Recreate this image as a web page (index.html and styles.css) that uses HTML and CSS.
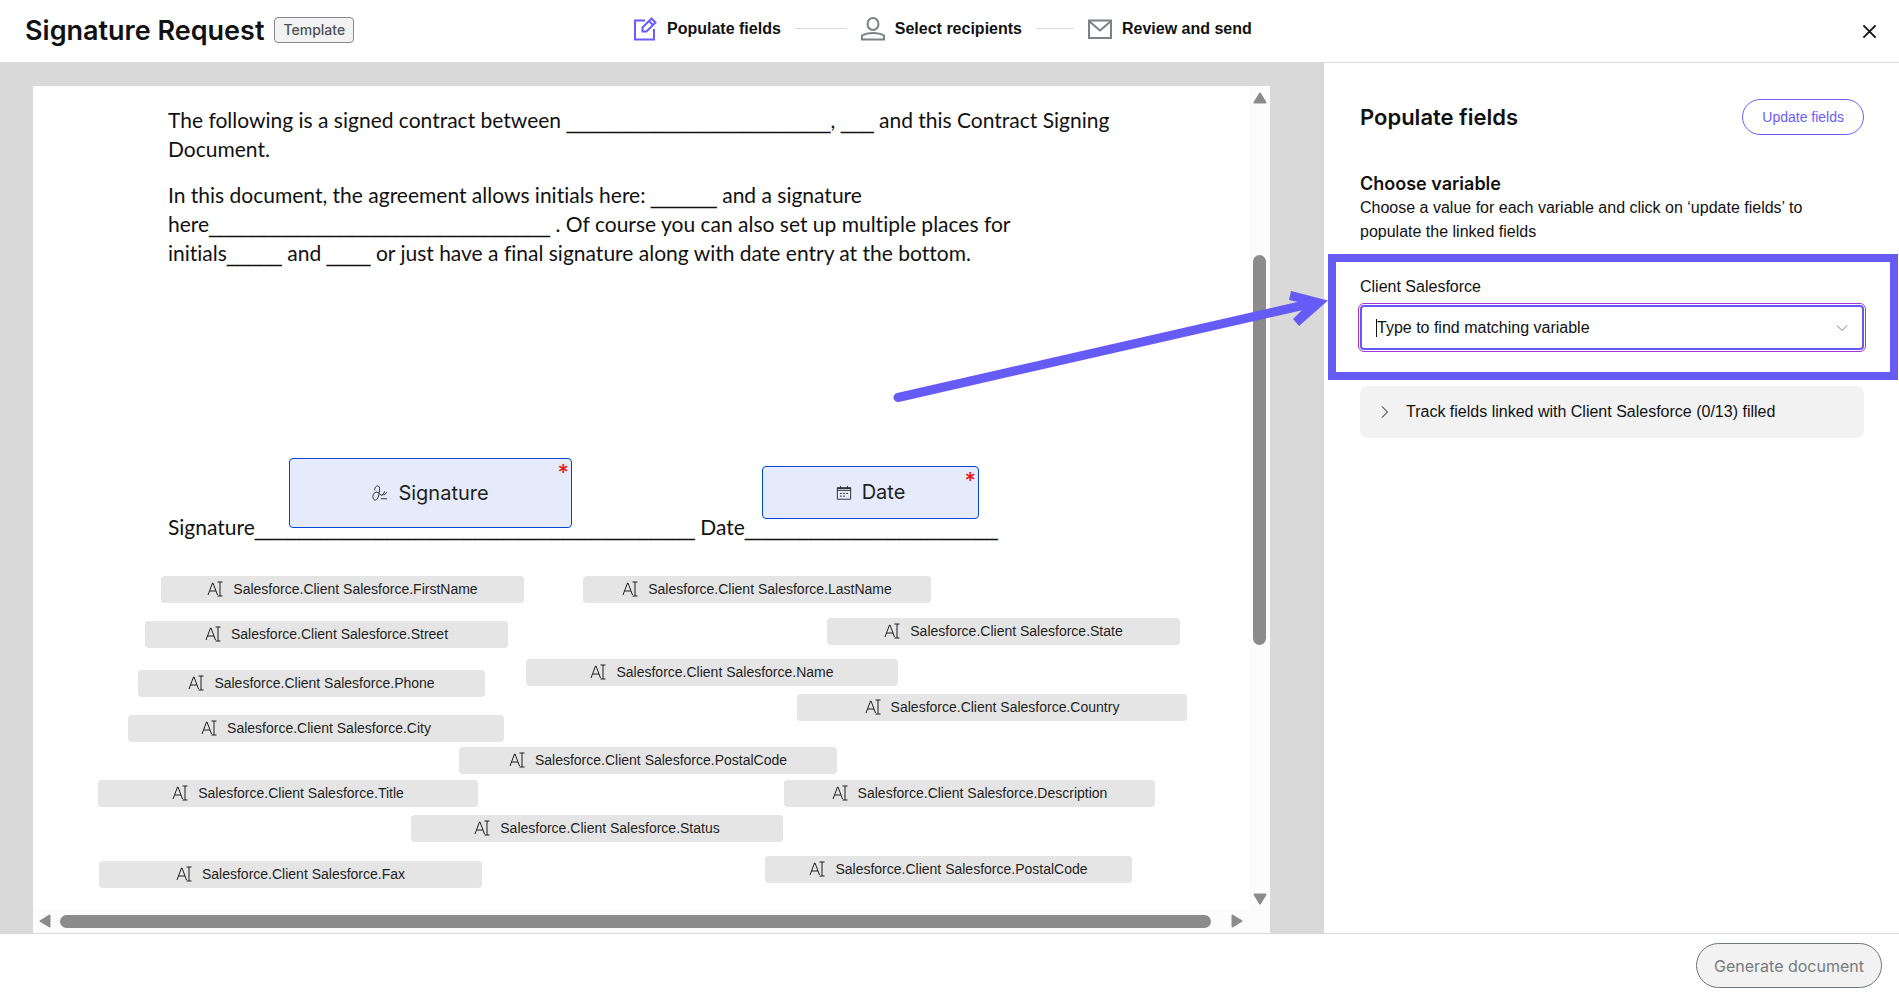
FILE: index.html
```html
<!DOCTYPE html>
<html lang="en">
<head>
<meta charset="utf-8">
<title>Signature Request</title>
<link rel="stylesheet" href="styles.css">
</head>
<body>
<svg class="sprite" aria-hidden="true">
  <symbol id="text-field" viewBox="0 0 16 16">
    <path d="M1 14 5.500 2h.5L10.500 14M2.500 10h6.500M10.500 1h5M13 1v14M10.500 15h5" fill="none" stroke="currentColor"/>
  </symbol>
</svg>

<header class="topbar">
  <div class="heading">
    <h1 class="title">Signature Request</h1>
    <span class="badge">Template</span>
  </div>
  <ol class="steps">
    <li class="step step-active">
      <svg class="step-icon" viewBox="0 0 24 24"><path d="M12 3.500H2v19h19V12M9.500 14.500v-4L18.500 1.500l4 4-9 9zM16 4l4 4" /></svg>
      <span>Populate fields</span>
    </li>
    <li class="rule rule-long" aria-hidden="true"></li>
    <li class="step">
      <svg class="step-icon" viewBox="0 0 24 24"><ellipse cx="12" cy="7" rx="5.500" ry="6"/><path d="M1 22.500v-4c6-3.500 16-3.500 22 0v4z"/></svg>
      <span>Select recipients</span>
    </li>
    <li class="rule" aria-hidden="true"></li>
    <li class="step">
      <svg class="step-icon" viewBox="0 0 24 24"><path d="M1 3.500h22v17.500H1zM1.500 4.500l10.500 9 10.500-9"/></svg>
      <span>Review and send</span>
    </li>
  </ol>
  <button class="close" type="button" aria-label="Close">
    <svg viewBox="0 0 16 16"><path d="M1.500 1.500l13 13M14.500 1.500l-13 13"/></svg>
  </button>
</header>

<main class="workspace">
  <section class="stage" aria-label="Document">
    <div class="viewer">
      <article class="page">
        <p>The following is a signed contract between <span class="blank">________________________</span>, <span class="blank">___</span> and this Contract Signing<br>Document.</p>
        <p>In this document, the agreement allows initials here: <span class="blank">______</span> and a signature<br>here<span class="blank">_______________________________</span> . Of course you can also set up multiple places for<br>initials<span class="blank">_____</span> and <span class="blank">____</span> or just have a final signature along with date entry at the bottom.</p>
        <p class="sign-line">Signature<span class="blank">________________________________________</span> Date<span class="blank">_______________________</span></p>

        <div class="field signer signer-signature">
          <svg class="signer-icon" viewBox="0 0 18 18"><path d="M3 6C3 2 5 1 6.500 1S9 3 8.500 6 8 14 5 16.500C3 18 1 16 1 13s2-5 4.500-5 3 3 5 3.500S14 8 14 7M11 12l2-2 1 1 3-3M10 15.500h7"/></svg>
          <span>Signature</span><span class="required">*</span>
        </div>
        <div class="field signer signer-date">
          <svg class="signer-icon" viewBox="0 0 18 18"><path d="M1.500 3h15v13h-15zM1.500 4h15M1.500 6h15M5 1v3M13 1v3M4.500 9.500h2M8 9.500h2M11.500 9.500h2M4.500 12.500h2M8 12.500h2"/></svg>
          <span>Date</span><span class="required">*</span>
        </div>

        <div class="field tag tag-first"><svg class="tag-icon"><use href="#text-field"/></svg><span>Salesforce.Client Salesforce.FirstName</span></div>
        <div class="field tag tag-last"><svg class="tag-icon"><use href="#text-field"/></svg><span>Salesforce.Client Salesforce.LastName</span></div>
        <div class="field tag tag-street"><svg class="tag-icon"><use href="#text-field"/></svg><span>Salesforce.Client Salesforce.Street</span></div>
        <div class="field tag tag-state"><svg class="tag-icon"><use href="#text-field"/></svg><span>Salesforce.Client Salesforce.State</span></div>
        <div class="field tag tag-phone"><svg class="tag-icon"><use href="#text-field"/></svg><span>Salesforce.Client Salesforce.Phone</span></div>
        <div class="field tag tag-name"><svg class="tag-icon"><use href="#text-field"/></svg><span>Salesforce.Client Salesforce.Name</span></div>
        <div class="field tag tag-country"><svg class="tag-icon"><use href="#text-field"/></svg><span>Salesforce.Client Salesforce.Country</span></div>
        <div class="field tag tag-city"><svg class="tag-icon"><use href="#text-field"/></svg><span>Salesforce.Client Salesforce.City</span></div>
        <div class="field tag tag-postal"><svg class="tag-icon"><use href="#text-field"/></svg><span>Salesforce.Client Salesforce.PostalCode</span></div>
        <div class="field tag tag-title"><svg class="tag-icon"><use href="#text-field"/></svg><span>Salesforce.Client Salesforce.Title</span></div>
        <div class="field tag tag-description"><svg class="tag-icon"><use href="#text-field"/></svg><span>Salesforce.Client Salesforce.Description</span></div>
        <div class="field tag tag-status"><svg class="tag-icon"><use href="#text-field"/></svg><span>Salesforce.Client Salesforce.Status</span></div>
        <div class="field tag tag-fax"><svg class="tag-icon"><use href="#text-field"/></svg><span>Salesforce.Client Salesforce.Fax</span></div>
        <div class="field tag tag-postal-alt"><svg class="tag-icon"><use href="#text-field"/></svg><span>Salesforce.Client Salesforce.PostalCode</span></div>
      </article>
      <div class="scroll scroll-y" aria-hidden="true">
        <svg class="scroll-arrow" viewBox="0 0 14 12"><path d="M7 1.500 12.500 10.500h-11z"/></svg>
        <div class="track-y"><div class="thumb-y"></div></div>
        <svg class="scroll-arrow" viewBox="0 0 14 12"><path d="M7 10.500 12.500 1.500h-11z"/></svg>
      </div>
      <div class="scroll scroll-x" aria-hidden="true">
        <svg class="scroll-arrow-x" viewBox="0 0 12 14"><path d="M1.500 7l9-5.500v11z"/></svg>
        <div class="thumb-x"></div>
        <svg class="scroll-arrow-x" viewBox="0 0 12 14"><path d="M10.500 7l-9-5.500v11z"/></svg>
      </div>
    </div>
  </section>

  <aside class="panel">
    <div class="panel-head">
      <h2 class="panel-title">Populate fields</h2>
      <button class="update" type="button">Update fields</button>
    </div>
    <h3 class="subtitle">Choose variable</h3>
    <p class="hint">Choose a value for each variable and click on ‘update fields’ to populate the linked fields</p>
    <div class="variable">
      <label class="label" for="variable">Client Salesforce</label>
      <div class="combo">
        <span class="caret"></span>
        <input class="combo-input" id="variable" type="text" role="combobox" aria-expanded="false" placeholder="Type to find matching variable">
        <svg class="combo-arrow" viewBox="0 0 12 8"><path d="M1 1.500l5 5 5-5"/></svg>
      </div>
      <div class="callout" aria-hidden="true">
        <svg class="callout-arrow" viewBox="0 0 440 130"><path class="shaft" d="M9 115.500 420 22"/><path d="M439 18.500 402 9l-2 9 13 3v7l-9 9 6 7z"/></svg>
      </div>
    </div>
    <button class="linked" type="button">
      <svg class="linked-icon" viewBox="0 0 8 12"><path d="M1 .5 6.500 6 1 11.500"/></svg>
      <span>Track fields linked with Client Salesforce (0/13) filled</span>
    </button>
  </aside>
</main>

<footer class="actions">
  <button class="generate" type="button" disabled>Generate document</button>
</footer>
</body>
</html>
```
FILE: styles.css
```css
* {
  box-sizing: border-box;
}

body {
  display: flex;
  flex-direction: column;
  min-height: 100vh;
  margin: 0;
  overflow: hidden;
  color: #111;
  background: #fff;
  font: 16px/24px "Liberation Sans", Arial, sans-serif;
}

h1, h2, h3, p, ol {
  margin: 0;
}

button, input {
  font: inherit;
  color: inherit;
}

svg {
  flex: none;
  fill: none;
  stroke: currentColor;
}

.sprite {
  position: absolute;
  width: 0;
  height: 0;
}

.title, .badge, .panel-title, .subtitle, .signer, .generate {
  font-family: Inter, "Liberation Sans", sans-serif;
}

/* Top bar */
.topbar {
  display: grid;
  grid-template-columns: 608px auto 1fr;
  align-items: center;
  height: 63px;
  padding: 0 18px 0 25px;
  border-bottom: 1px solid #d9d9d9;
}

.heading {
  display: flex;
  align-items: center;
  gap: 10px;
}

.title {
  font-size: 27px;
  font-weight: 600;
  line-height: 32px;
}

.badge {
  margin-bottom: 2px;
  padding: 0 8px;
  border: 1px solid #85898f;
  border-radius: 4px;
  background: #f2f2f2;
  color: #4d5156;
  font-size: 14px;
  font-weight: 500;
}

.steps {
  display: flex;
  align-items: center;
  padding: 0 0 5px;
  list-style: none;
  font-weight: 700;
}

.step {
  display: flex;
  align-items: center;
  gap: 10px;
}

.step-icon {
  width: 24px;
  height: 24px;
  color: #7b8287;
  stroke-width: 2;
}

.step-active .step-icon {
  color: #6a5cff;
}

.rule {
  width: 38px;
  height: 1px;
  margin: 0 14px;
  background: #d9d9d9;
}

.rule-long {
  width: 52px;
}

.close {
  justify-self: end;
  display: grid;
  place-items: center;
  width: 24px;
  height: 24px;
  padding: 0;
  border: 0;
  background: none;
}

.close svg {
  width: 15px;
  height: 15px;
  stroke-width: 2;
}

/* Document */
.workspace {
  display: flex;
  flex: 1;
}

.stage {
  display: flex;
  flex: 1;
  padding: 23px 54px 0 33px;
  border-bottom: 1px solid #d9d9d9;
  background: #d9d9d9;
}

.viewer {
  display: grid;
  flex: 1;
  grid-template: 1fr 24px / 1fr 21px;
  background: #fcfcfc;
}

.page {
  position: relative;
  padding: 19px 100px 0 135px;
  background: #fff;
  font: 21px/29px Lato, sans-serif;
  font-variant-ligatures: none;
  white-space: nowrap;
}

.page p {
  margin-bottom: 17px;
}

.page .sign-line {
  margin-top: 245px;
}

.blank {
  font: 22px/20px "DejaVu Sans", sans-serif;
}

.field {
  position: absolute;
  display: flex;
  align-items: center;
  justify-content: center;
  gap: 10px;
  color: #1f1f1f;
}

.tag {
  height: 27px;
  padding-bottom: 2px;
  border-radius: 4px;
  background: #e5e5e5;
  font: 14px/24px "Liberation Sans", Arial, sans-serif;
}

.tag-icon {
  width: 16px;
  height: 16px;
}

.signer {
  border: 1px solid #0047d6;
  border-radius: 4px;
  background: #e5ebfb;
  font-size: 20px;
}

.signer-icon {
  width: 16px;
  height: 18px;
}

.required {
  position: absolute;
  top: 1px;
  right: 2px;
  color: #f01414;
  font-size: 22px;
  font-weight: 500;
  line-height: 24px;
}

.signer-signature { left: 256px; top: 372px; width: 283px; height: 70px; }
.signer-date { left: 729px; top: 380px; width: 217px; height: 53px; }
.tag-first { left: 128px; top: 490px; width: 363px; }
.tag-last { left: 550px; top: 490px; width: 348px; }
.tag-street { left: 112px; top: 535px; width: 363px; }
.tag-state { left: 794px; top: 532px; width: 353px; }
.tag-phone { left: 105px; top: 584px; width: 347px; }
.tag-name { left: 493px; top: 573px; width: 372px; }
.tag-country { left: 764px; top: 608px; width: 390px; }
.tag-city { left: 95px; top: 629px; width: 376px; }
.tag-postal { left: 426px; top: 661px; width: 378px; }
.tag-title { left: 65px; top: 694px; width: 380px; }
.tag-description { left: 751px; top: 694px; width: 371px; }
.tag-status { left: 378px; top: 729px; width: 372px; }
.tag-fax { left: 66px; top: 775px; width: 383px; }
.tag-postal-alt { left: 732px; top: 770px; width: 367px; }

.scroll {
  display: flex;
  align-items: center;
  color: #8b8b8b;
}

.scroll svg {
  fill: currentColor;
  stroke-width: 2;
  stroke-linejoin: round;
}

.scroll-y {
  flex-direction: column;
  padding: 6px 0 4px;
}

.scroll-arrow {
  width: 14px;
  height: 12px;
}

.scroll-arrow-x {
  width: 12px;
  height: 14px;
}

.track-y {
  flex: 1;
  padding-top: 151px;
}

.thumb-y {
  width: 13px;
  height: 390px;
  border-radius: 7px;
  background: #8b8b8b;
}

.scroll-x {
  padding: 0 6px;
}

.thumb-x {
  flex: 1;
  height: 13px;
  margin: 0 20px 0 9px;
  border-radius: 7px;
  background: #8b8b8b;
}

/* Side panel */
.panel {
  width: 575px;
  padding: 36px 35px 0 36px;
  border-bottom: 1px solid #d9d9d9;
}

.panel-head {
  display: flex;
  align-items: center;
  justify-content: space-between;
}

.panel-title {
  font-size: 22px;
  font-weight: 600;
}

.update {
  height: 36px;
  padding: 0 19px;
  border: 1px solid #6a5cff;
  border-radius: 18px;
  background: #fff;
  color: #6a5cff;
  font-size: 14px;
}

.subtitle {
  margin-top: 37px;
  font-size: 18px;
  font-weight: 600;
}

.variable {
  position: relative;
  margin-top: 31px;
}

.label {
  display: block;
}

.combo {
  display: flex;
  align-items: center;
  height: 45px;
  margin-top: 6px;
  padding: 0 14px;
  border: 2px solid #6459f5;
  border-radius: 4px;
  outline: 1px solid #a832d6;
  outline-offset: 1px;
}

.caret {
  width: 1px;
  height: 18px;
  background: #111;
}

.combo-input {
  flex: 1;
  min-width: 0;
  padding: 0;
  border: 0;
  outline: 0;
  background: none;
}

.combo-input::placeholder {
  color: #111;
  opacity: 1;
}

.combo-arrow {
  width: 12px;
  height: 8px;
  color: #777;
}

.callout {
  position: absolute;
  top: -21px;
  right: -34px;
  bottom: -30px;
  left: -32px;
  border: 8px solid #665cf5;
}

.callout-arrow {
  position: absolute;
  top: 20px;
  right: 100%;
  width: 440px;
  height: 130px;
  margin-right: 7px;
  fill: #665cf5;
  stroke: none;
}

.shaft {
  stroke: #665cf5;
  stroke-width: 9;
  stroke-linecap: round;
}

.linked {
  display: flex;
  align-items: center;
  gap: 17px;
  width: 100%;
  height: 52px;
  margin-top: 36px;
  padding: 0 21px;
  border: 0;
  border-radius: 8px;
  background: #f2f2f2;
}

.linked-icon {
  width: 8px;
  height: 12px;
  stroke-width: 1;
}

/* Footer */
.actions {
  display: flex;
  align-items: center;
  justify-content: flex-end;
  height: 59px;
  padding: 4px 17px 0;
}

.generate {
  height: 45px;
  padding: 0 17px;
  border: 1px solid #6f767b;
  border-radius: 23px;
  background: #f2f2f2;
  color: #767b80;
}
```
